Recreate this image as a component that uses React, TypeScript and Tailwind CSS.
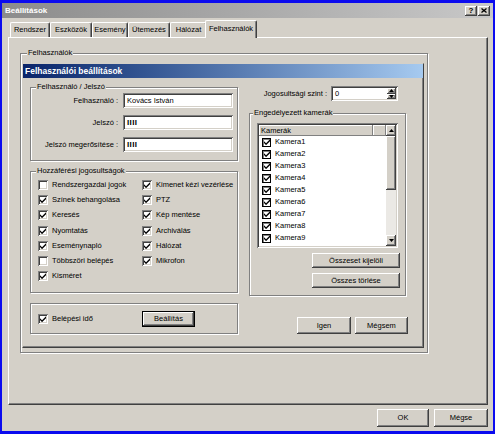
const raised =
  "shadow-[inset_-1px_-1px_0_#404040,inset_1px_1px_0_#ffffff,inset_-2px_-2px_0_#808080]";
const sunken =
  "shadow-[inset_1px_1px_0_#808080,inset_-1px_-1px_0_#ffffff,inset_2px_2px_0_#404040,inset_-2px_-2px_0_#d4d0c8]";
const etched = "border border-[#808080] shadow-[1px_1px_0_#ffffff,inset_1px_1px_0_#ffffff]";

const CheckMark = () => (
  <svg viewBox="0 0 7 7" className="w-[6px] h-[6px]">
    <polygon points="0,2.6 2.4,5 7,0.4 7,2.6 2.4,7.2 0,4.8" fill="#000" />
  </svg>
);

const CheckBox = ({ checked }: { checked: boolean }) => (
  <span
    className={`w-[10px] h-[10px] shrink-0 bg-white flex items-center justify-center ${sunken}`}
  >
    {checked && <CheckMark />}
  </span>
);

const Btn = ({
  children,
  className = "",
}: {
  children: React.ReactNode;
  className?: string;
}) => (
  <button
    className={`bg-[#d4d0c8] flex items-center justify-center ${raised} ${className}`}
  >
    {children}
  </button>
);

const Arrow = ({ up }: { up?: boolean }) => (
  <svg viewBox="0 0 7 4" className="w-[5px] h-[3px]">
    <polygon points={up ? "3.5,0 7,4 0,4" : "0,0 7,0 3.5,4"} fill="#000" />
  </svg>
);

const Legend = ({ children, className = "" }: { children: string; className?: string }) => (
  <legend className={`px-[1px] bg-[#d4d0c8] ${className}`}>{children}</legend>
);

const leftRights: [string, boolean][] = [
  ["Rendszergazdai jogok", false],
  ["Színek behangolása", true],
  ["Keresés", true],
  ["Nyomtatás", true],
  ["Eseménynapló", true],
  ["Többszöri belépés", false],
  ["Kisméret", true],
];

const rightRights: [string, boolean][] = [
  ["Kimenet kézi vezérlése", true],
  ["PTZ", true],
  ["Kép mentése", true],
  ["Archiválás", true],
  ["Hálózat", true],
  ["Mikrofon", true],
];

const cameras = Array.from({ length: 10 }, (_, i) => `Kamera${i + 1}`);

const tabs = [
  { label: "Rendszer", w: "w-[40px]" },
  { label: "Eszközök", w: "w-[42px]" },
  { label: "Esemény", w: "w-[36px]" },
  { label: "Ütemezés", w: "w-[42px]" },
  { label: "Hálózat", w: "w-[37px]" },
];

function TitleBar() {
  return (
    <div className="h-[15px] shrink-0 flex items-center justify-between pl-[3px] pr-[3px] bg-linear-to-r from-[#8c8c8c] to-[#c8c8c8]">
      <span className="text-white font-bold text-[8px]">Beállítások</span>
      <div className="flex gap-[1px]">
        <span
          className={`w-[12px] h-[10px] bg-[#d4d0c8] flex items-center justify-center font-bold text-[8px] leading-none ${raised}`}
        >
          ?
        </span>
        <span
          className={`w-[12px] h-[10px] bg-[#d4d0c8] flex items-center justify-center ${raised}`}
        >
          <svg viewBox="0 0 6 5" className="w-[6px] h-[5px]">
            <path d="M0.5 0.5 L5.5 4.5 M5.5 0.5 L0.5 4.5" stroke="#000" strokeWidth="1.3" />
          </svg>
        </span>
      </div>
    </div>
  );
}

function Tabs() {
  return (
    <div className="h-[17px] shrink-0 flex items-end pl-[2px]">
      {tabs.map((t) => (
        <div
          key={t.label}
          className={`${t.w} h-[15px] flex items-center justify-center border-t border-l border-white border-r border-r-[#404040] rounded-t-[2px] shadow-[inset_-1px_0_0_#808080]`}
        >
          {t.label}
        </div>
      ))}
      <div className="relative z-10 -ml-[2px] w-[52px] h-[18px] -mb-px bg-[#d4d0c8] flex items-center justify-center pb-[1px] border-t border-l border-white border-r border-r-[#404040] rounded-t-[2px] shadow-[inset_-1px_0_0_#808080]">
        Felhasználók
      </div>
    </div>
  );
}

function CameraList() {
  return (
    <div className={`ml-[7px] mt-[5px] w-[141px] h-[125px] bg-white p-[2px] ${sunken}`}>
      <div className="flex h-full">
        <div className="flex-1 flex flex-col overflow-hidden">
          <div className="flex h-[11px] shrink-0">
            <div className="w-[114px] bg-[#d4d0c8] pl-[2px] flex items-center shadow-[inset_-1px_-1px_0_#808080,inset_1px_1px_0_#ffffff]">
              Kamerák
            </div>
            <div className="flex-1 bg-[#d4d0c8] shadow-[inset_-1px_-1px_0_#808080,inset_1px_1px_0_#ffffff]" />
          </div>
          {cameras.map((c) => (
            <div key={c} className="h-[12px] shrink-0 flex items-center pl-[3px] gap-[4px]">
              <span className="w-[9px] h-[9px] border border-black bg-white flex items-center justify-center shadow-[inset_1px_1px_0_#808080]">
                <CheckMark />
              </span>
              <span>{c}</span>
            </div>
          ))}
        </div>
        <div className="w-[10px] flex flex-col bg-[#ebe9e5]">
          <div className={`h-[11px] bg-[#d4d0c8] flex items-center justify-center ${raised}`}>
            <Arrow up />
          </div>
          <div className={`h-[54px] bg-[#d4d0c8] ${raised}`} />
          <div className="flex-1" />
          <div className={`h-[11px] bg-[#d4d0c8] flex items-center justify-center ${raised}`}>
            <Arrow />
          </div>
        </div>
      </div>
    </div>
  );
}

function UserSettings() {
  return (
    <div className="ml-[1px] mt-[5px] w-[402px] h-[285px] flex flex-col border border-t-[#d4d0c8] border-l-[#d4d0c8] border-r-[#404040] border-b-[#404040] shadow-[inset_-1px_-1px_0_#808080]">
      <div className="h-[14px] shrink-0 flex items-center pl-[2px] bg-linear-to-r from-[#0a246a] to-[#a6caf0] text-white font-bold text-[8.5px]">
        Felhasználói beállítások
      </div>
      <div className="flex pl-[7px] gap-[11px]">
        {/* left column */}
        <div className="w-[208px] flex flex-col pt-[4px]">
          <fieldset className={`h-[79px] ${etched}`}>
            <Legend className="ml-[5px]">Felhasználó / Jelszó</Legend>
            <div className="flex flex-col gap-[7px] pt-[1px]">
              {[
                ["Felhasználó :", "Kovács István", false],
                ["Jelszó :", "IIII", true],
                ["Jelszó megerősítése :", "IIII", true],
              ].map(([label, value, pw]) => (
                <div key={label as string} className="flex items-center">
                  <span className="w-[87px] text-right">{label}</span>
                  <div
                    className={`ml-[5px] w-[110px] h-[15px] bg-white flex items-center pl-[4px] ${sunken} ${pw ? "font-bold text-[8px] tracking-[0.4px]" : ""}`}
                  >
                    {value}
                  </div>
                </div>
              ))}
            </div>
          </fieldset>

          <fieldset className={`mt-[5px] h-[127px] ${etched}`}>
            <Legend className="ml-[5px]">Hozzáférési jogosultságok</Legend>
            <div className="flex pl-[7px] pt-[1px]">
              <div className="w-[104px] flex flex-col">
                {leftRights.map(([l, c]) => (
                  <div key={l} className="h-[15.3px] flex items-center gap-[4px]">
                    <CheckBox checked={c} />
                    <span>{l}</span>
                  </div>
                ))}
              </div>
              <div className="flex flex-col">
                {rightRights.map(([l, c]) => (
                  <div key={l} className="h-[15.3px] flex items-center gap-[4px]">
                    <CheckBox checked={c} />
                    <span>{l}</span>
                  </div>
                ))}
              </div>
            </div>
          </fieldset>

          <div className={`mt-[10px] h-[31px] flex items-center pl-[7px] ${etched}`}>
            <div className="w-[104px] flex items-center gap-[4px]">
              <CheckBox checked />
              <span>Belépési idő</span>
            </div>
            <Btn className="w-[53px] h-[16px] border border-black">Beállítás</Btn>
          </div>
        </div>

        {/* right column */}
        <div className="w-[159px] flex flex-col pt-[8px]">
          <div className="flex items-center">
            <span className="w-[78px] text-right">Jogosultsági szint :</span>
            <div
              className={`ml-[4px] w-[67px] h-[15px] bg-white flex items-center pl-[4px] pr-[2px] ${sunken}`}
            >
              <span className="flex-1">0</span>
              <div className="w-[9px] h-[11px] flex flex-col">
                <div className={`flex-1 bg-[#d4d0c8] flex items-center justify-center ${raised}`}>
                  <Arrow up />
                </div>
                <div className={`flex-1 bg-[#d4d0c8] flex items-center justify-center ${raised}`}>
                  <Arrow />
                </div>
              </div>
            </div>
          </div>

          <fieldset className={`mt-[7px] w-[157px] h-[188px] ${etched}`}>
            <Legend className="ml-[3px]">Engedélyezett kamerák</Legend>
            <div className="flex flex-col">
              <CameraList />
              <div className="flex flex-col items-end gap-[5px] mt-[5px] pr-[5px]">
                <Btn className="w-[88px] h-[15px]">Összeset kijelöli</Btn>
                <Btn className="w-[88px] h-[15px]">Összes törlése</Btn>
              </div>
            </div>
          </fieldset>

          <div className="mt-[21px] flex justify-end gap-[4px]">
            <Btn className="w-[54px] h-[17px]">Igen</Btn>
            <Btn className="w-[53px] h-[17px]">Mégsem</Btn>
          </div>
        </div>
      </div>
    </div>
  );
}

export default function App() {
  return (
    <div className="w-[495px] h-[434px] bg-[#0b0bef] pt-[3px] px-[2px] pb-[3px] font-['Liberation_Sans',Arial,sans-serif] text-[7.5px] leading-[10px] text-black whitespace-nowrap select-none">
      <div className="w-full h-full bg-[#d4d0c8] flex flex-col">
        <TitleBar />
        <div className="flex-1 flex flex-col pl-[6px] pr-[5px] pt-[2px] pb-[4px]">
          <Tabs />
          <div className="h-[368px] shrink-0 pl-[11px] pt-[10px] border border-t-white border-l-white border-r-[#404040] border-b-[#404040] shadow-[inset_-1px_-1px_0_#808080]">
            <fieldset className={`w-[408px] h-[305px] ${etched}`}>
              <Legend className="ml-[6px]">Felhasználók</Legend>
              <UserSettings />
            </fieldset>
          </div>
          <div className="flex justify-end gap-[5px] mt-[4px]">
            <Btn className="w-[52px] h-[18px]">OK</Btn>
            <Btn className="w-[54px] h-[18px]">Mégse</Btn>
          </div>
        </div>
      </div>
    </div>
  );
}
